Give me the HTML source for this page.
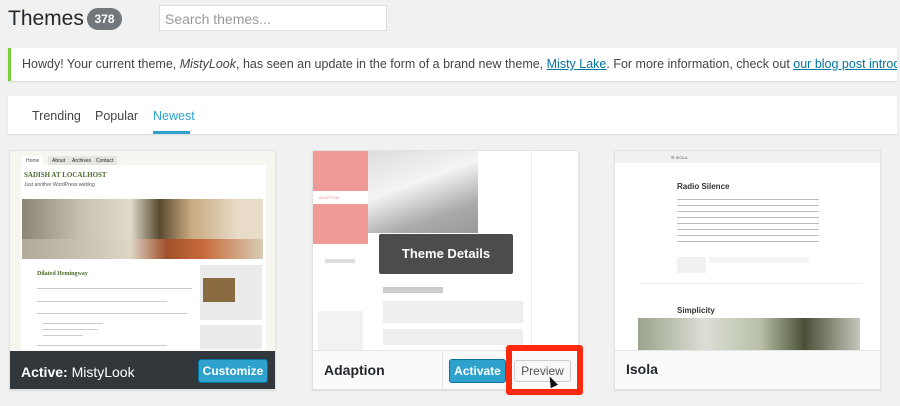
<!DOCTYPE html>
<html><head><style>
*{margin:0;padding:0;box-sizing:border-box}
body{width:900px;height:406px;background:#f1f1f1;font-family:"Liberation Sans",sans-serif;color:#23282d;position:relative;overflow:hidden}
.a{position:absolute}
.card{position:absolute;top:150px;width:267px;height:240px;background:#fff;box-shadow:0 1px 1px rgba(0,0,0,.1);border:1px solid #e2e2e2;overflow:hidden}
.foot{position:absolute;left:0;right:0;bottom:0;height:39px;background:#fafafa;border-top:1px solid #e5e5e5}
.name{position:absolute;left:11px;top:11px;font-size:14px;font-weight:bold;color:#23282d}
.btn{position:absolute;font-size:12px;border-radius:3px;text-align:center;line-height:22px}
.blue{background:#2ea2cc;color:#fff;border:1px solid #0074a2;font-weight:bold}
.ln{position:absolute;height:2px;background:#ccc}
</style></head><body>
<div class="a" style="left:8px;top:7px;font-size:21px;color:#23282d">Themes</div>
<div class="a" style="left:87px;top:8px;width:35px;height:22px;border-radius:11px;background:#72777c;color:#fff;font-size:12px;font-weight:bold;text-align:center;line-height:22px">378</div>
<div class="a" style="left:159px;top:5px;width:228px;height:26px;background:#fff;border:1px solid #ddd;font-size:14px;color:#999;padding:5px 5px">Search themes...</div>
<div class="a" style="left:8px;top:48px;width:889px;height:33px;background:#fff;border-left:3px solid #7ad03a;box-shadow:0 1px 1px rgba(0,0,0,.1);font-size:12.5px;line-height:32px;padding-left:11px;white-space:nowrap;overflow:hidden;color:#444">Howdy! Your current theme, <i>MistyLook</i>, has seen an update in the form of a brand new theme, <u style="color:#0074a2">Misty Lake</u>. For more information, check out <u style="color:#0074a2">our blog post introducing Misty Lake</u></div>
<div class="a" style="left:8px;top:96px;width:889px;height:38px;background:#fff;box-shadow:0 1px 1px rgba(0,0,0,.1)"></div>
<div class="a" style="left:32px;top:109px;font-size:12.5px;color:#444">Trending</div>
<div class="a" style="left:95px;top:109px;font-size:12.5px;color:#444">Popular</div>
<div class="a" style="left:153px;top:109px;font-size:12.5px;color:#2ea2cc">Newest</div>
<div class="a" style="left:153px;top:131px;width:37px;height:3px;background:#2ea2cc"></div>

<div class="card" style="left:9px">
 <div class="a" style="left:0;top:0;width:267px;height:200px;background:#f6f5f0"></div>
 <div class="a" style="left:12px;top:5px;font-size:5px;color:#555;background:#fff;padding:2px 4px">Home</div>
 <div class="a" style="left:38px;top:5px;font-size:5px;background:#e4e6df;padding:2px 4px">About</div>
 <div class="a" style="left:58px;top:5px;font-size:5px;background:#e4e6df;padding:2px 4px">Archives</div>
 <div class="a" style="left:82px;top:5px;font-size:5px;background:#e4e6df;padding:2px 4px">Contact</div>
 <div class="a" style="left:11px;top:14px;width:245px;height:185px;background:#fff"></div>
 <div class="a" style="left:14px;top:20px;font-size:7px;font-weight:bold;color:#4a6a2c;font-family:'Liberation Serif',serif">SADISH AT LOCALHOST</div>
 <div class="a" style="left:14px;top:31px;font-size:5px;color:#555">Just another WordPress weblog</div>
 <div class="a" style="left:12px;top:48px;width:241px;height:60px;background:linear-gradient(90deg,#8a8576 0%,#c8c2b0 25%,#e0dacc 45%,#5a4a30 57%,#c8a880 70%,#e8dcc8 90%);"></div>
 <div class="a" style="left:12px;top:88px;width:241px;height:20px;background:linear-gradient(90deg,#b0a898,#ddd6c6 45%,#a0502a 60%,#c86a3a 75%,#d8ccb4)"></div>
 <div class="a" style="left:27px;top:120px;font-size:6px;color:#4a6a2c;font-family:'Liberation Serif',serif;font-weight:bold">Dilated Hemingway</div>
 <div class="ln" style="left:27px;top:137px;width:155px;height:1px"></div>
 <div class="ln" style="left:27px;top:150px;width:130px;height:1px"></div>
 <div class="ln" style="left:27px;top:162px;width:150px;height:1px"></div>
 <div class="ln" style="left:33px;top:172px;width:60px;height:1px"></div>
 <div class="ln" style="left:33px;top:178px;width:55px;height:1px"></div>
 <div class="ln" style="left:33px;top:184px;width:40px;height:1px"></div>
 <div class="ln" style="left:27px;top:194px;width:130px;height:1px"></div>
 <div class="a" style="left:190px;top:114px;width:62px;height:55px;background:#ebebeb"></div>
 <div class="a" style="left:193px;top:127px;width:32px;height:24px;background:#8a6a40"></div>
 <div class="a" style="left:190px;top:174px;width:62px;height:24px;background:#ebebeb"></div>
 <div class="a" style="left:0;top:200px;width:267px;height:40px;background:#32373c"></div>
 <div class="a" style="left:11px;top:213px;font-size:14px;color:#fff"><b>Active:</b> MistyLook</div>
 <div class="btn blue" style="left:188px;top:208px;width:70px;height:24px;line-height:22px">Customize</div>
</div>

<div class="card" style="left:312px">
 <div class="a" style="left:0;top:0;width:55px;height:40px;background:#ef9a97"></div>
 <div class="a" style="left:0;top:40px;width:55px;height:13px;background:#fff;font-size:4px;color:#ef9a97;padding:4px 6px">ADAPTION</div>
 <div class="a" style="left:0;top:53px;width:55px;height:40px;background:#ef9a97"></div>
 <div class="a" style="left:55px;top:0;width:110px;height:82px;background:linear-gradient(160deg,#ddd 0%,#f4f4f4 40%,#aaa 75%,#999)"></div>
 <div class="a" style="left:218px;top:0;width:1px;height:200px;background:#eee"></div>
 <div class="ln" style="left:12px;top:108px;width:30px;height:4px;background:#ddd"></div>
 <div class="ln" style="left:70px;top:136px;width:60px;height:6px;background:#ccc"></div>
 <div class="ln" style="left:70px;top:150px;width:140px;height:22px;background:#eee"></div>
 <div class="ln" style="left:70px;top:178px;width:140px;height:16px;background:#eee"></div>
 <div class="ln" style="left:5px;top:160px;width:45px;height:50px;background:#f2f2f2"></div>
 <div class="a" style="left:66px;top:83px;width:134px;height:40px;background:rgba(0,0,0,.7);border-radius:2px;color:#fff;font-size:13px;font-weight:bold;text-align:center;line-height:40px">Theme Details</div>
 <div class="foot"><div class="name">Adaption</div>
  <div class="a" style="left:129px;top:0;width:1px;height:39px;background:#e5e5e5"></div>
  <div class="btn blue" style="left:136px;top:8px;width:57px;height:24px">Activate</div>
  <div class="btn" style="left:201px;top:9px;width:57px;height:22px;background:#f7f7f7;border:1px solid #ccc;color:#555;line-height:20px">Preview</div>
 </div>
</div>
<div class="a" style="left:506px;top:345px;width:77px;height:50px;border:6px solid #fb2a0f;border-radius:3px"></div>
<div class="a" style="left:548px;top:376px;width:0;height:0;border-left:4px solid transparent;border-right:4px solid transparent;border-bottom:11px solid #111;transform:rotate(-25deg)"></div>

<div class="card" style="left:614px">
 <div class="a" style="left:0;top:0;width:267px;height:12px;background:#f1f1f1"></div>
 <div class="a" style="left:56px;top:4px;font-size:4px;color:#555">☰ ISOLA</div>
 <div class="a" style="left:62px;top:31px;font-size:8px;font-weight:bold;color:#333">Radio Silence</div>
 <div class="ln" style="left:62px;top:48px;width:142px;height:48px;background:repeating-linear-gradient(#bbb 0 1px,#fff 1px 6px)"></div>
 <div class="a" style="left:62px;top:106px;width:29px;height:16px;background:#f1f1f1"></div>
 <div class="a" style="left:94px;top:106px;width:100px;height:6px;background:#f5f5f5"></div>
 <div class="a" style="left:25px;top:132px;width:222px;height:1px;background:#eee"></div>
 <div class="a" style="left:62px;top:155px;font-size:8px;font-weight:bold;color:#333">Simplicity</div>
 <div class="a" style="left:23px;top:167px;width:222px;height:33px;background:linear-gradient(90deg,#9aa38a,#dcdfd6 30%,#b8c0a8 55%,#4a5038 75%,#c4c8bc)"></div>
 <div class="foot"><div class="name" style="top:10px">Isola</div></div>
</div>
</body></html>
